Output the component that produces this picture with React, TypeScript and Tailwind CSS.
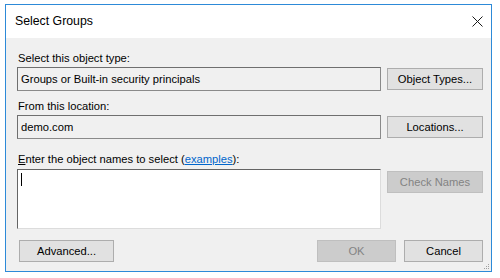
import React from 'react';

const font = { fontFamily: '"Liberation Sans", Arial, sans-serif' };

function Button({ label, width, disabled }: { label: string; width: string; disabled?: boolean }) {
  return (
    <button
      className={
        disabled
          ? `${width} h-[22px] shrink-0 border border-[#bfbfbf] bg-[#cccccc] text-[11.2px] text-[#838383]`
          : `${width} h-[22px] shrink-0 border border-[#adadad] bg-[#e1e1e1] text-[11.2px] text-black`
      }
    >
      {label}
    </button>
  );
}

function Field({ value }: { value: string }) {
  return (
    <div className="w-[364px] h-[24px] shrink-0 border border-[#8a8a8a] border-t-[#6f6f6f] border-l-[#6f6f6f] bg-[#f0f0f0] flex items-center pl-[3px] text-[11.2px] text-black">
      {value}
    </div>
  );
}

export default function App() {
  return (
    <div className="w-[500px] h-[278px] bg-white pt-[4px] pl-[5px]" style={font}>
      <div className="w-[487px] h-[268px] border border-[#2d8ad8] flex flex-col">
        {/* Title bar */}
        <div className="h-[33px] bg-white flex items-center justify-between pl-[9px] pr-[7px]">
          <span className="text-[12.3px] text-black">Select Groups</span>
          <svg width="11" height="11" viewBox="0 0 11 11" className="mr-[1px]">
            <path d="M0.5 0.5 L10.5 10.5 M10.5 0.5 L0.5 10.5" stroke="#1a1a1a" strokeWidth="1" />
          </svg>
        </div>

        {/* Body */}
        <div className="relative flex-1 bg-[#f0f0f0] pl-[11px] pr-[8px] pt-[13px] text-[11.2px] text-black">
          <div className="pl-[1px] h-[14px] leading-[14px]">Select this object type:</div>
          <div className="mt-[2px] flex items-center gap-[6px]">
            <Field value="Groups or Built-in security principals" />
            <Button label="Object Types..." width="w-[96px]" />
          </div>

          <div className="mt-[8px] pl-[1px] h-[14px] leading-[14px]">From this location:</div>
          <div className="mt-[2px] flex items-center gap-[6px]">
            <Field value="demo.com" />
            <Button label="Locations..." width="w-[96px]" />
          </div>

          <div className="mt-[13px] pl-[1px] h-[14px] leading-[14px]">
            <span className="underline">E</span>nter the object names to select (
            <span className="text-[#0066cc] underline">examples</span>):
          </div>
          <div className="mt-[3px] flex items-start gap-[6px]">
            <div className="w-[364px] h-[60px] shrink-0 bg-white border border-[#dcdcdc] border-t-[#646464] border-l-[#646464] pl-[3px] pt-[3px]">
              <div className="w-[1px] h-[13px] bg-black" />
            </div>
            <div className="mt-[2px]">
              <Button label="Check Names" width="w-[96px]" disabled />
            </div>
          </div>

          <div className="mt-[11px] flex items-center">
            <div className="ml-[2px]">
              <Button label="Advanced..." width="w-[95px]" />
            </div>
            <div className="flex-1" />
            <div className="flex gap-[8px]">
              <Button label="OK" width="w-[79px]" disabled />
              <Button label="Cancel" width="w-[79px]" />
            </div>
          </div>

          {/* Resize grip */}
          <svg width="7" height="7" viewBox="0 0 7 7" className="absolute right-[1px] bottom-[1px]">
            <rect x="5" y="1" width="1" height="1" fill="#a0a0a0" />
            <rect x="3" y="3" width="1" height="1" fill="#a0a0a0" />
            <rect x="5" y="3" width="1" height="1" fill="#a0a0a0" />
            <rect x="1" y="5" width="1" height="1" fill="#a0a0a0" />
            <rect x="3" y="5" width="1" height="1" fill="#a0a0a0" />
            <rect x="5" y="5" width="1" height="1" fill="#a0a0a0" />
          </svg>
        </div>
      </div>
    </div>
  );
}
